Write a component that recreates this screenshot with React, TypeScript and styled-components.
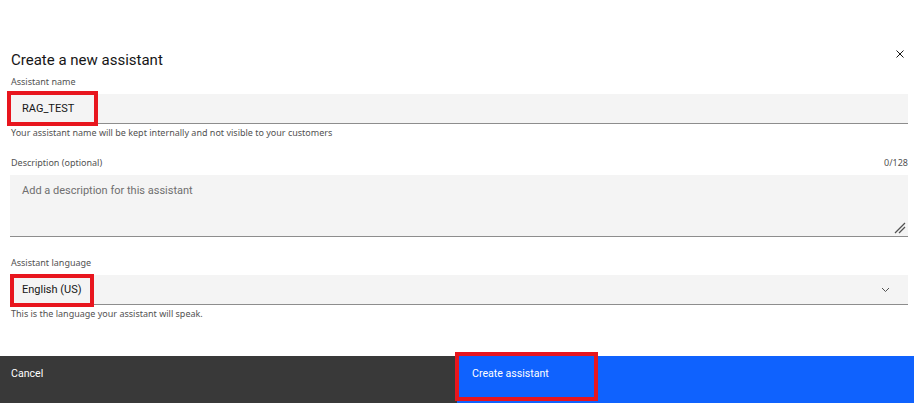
import React from "react";
import styled, { createGlobalStyle } from "styled-components";

const Global = createGlobalStyle`
  html, body { margin: 0; padding: 0; background: #ffffff; }
  body { font-family: "Noto Sans", Roboto, sans-serif; }
  * { box-sizing: border-box; }
`;

const Page = styled.div`
  position: relative;
  height: 100vh;
  display: flex;
  flex-direction: column;
  background: #ffffff;
`;

const Body = styled.div`
  position: relative;
  padding: 50px 6px 0 10px;
  display: flex;
  flex-direction: column;
`;

const Title = styled.h2`
  margin: 0 0 6px 1px;
  font-family: Roboto, "Noto Sans", sans-serif;
  font-weight: 400;
  font-size: 15px;
  line-height: 20px;
  color: #161616;
`;

const CloseButton = styled.button`
  position: absolute;
  top: 46px;
  right: 6px;
  width: 16px;
  height: 16px;
  padding: 0;
  border: 0;
  background: transparent;
  display: flex;
  align-items: center;
  justify-content: center;
`;

const Field = styled.div<{ $gap?: number }>`
  display: flex;
  flex-direction: column;
  margin-top: ${(p) => p.$gap ?? 0}px;
`;

const LabelRow = styled.div`
  display: flex;
  justify-content: space-between;
  align-items: center;
  margin-bottom: 6px;
  padding-left: 1px;
`;

const Label = styled.label`
  font-family: "Noto Sans", sans-serif;
  font-size: 9px;
  line-height: 12px;
  color: #525252;
`;

const Counter = styled.span`
  font-family: "Noto Sans", sans-serif;
  font-size: 9px;
  line-height: 12px;
  color: #525252;
`;

const InputBox = styled.div<{ $h: number }>`
  position: relative;
  height: ${(p) => p.$h}px;
  background: #f4f4f4;
  border-bottom: 1px solid #8d8d8d;
  display: flex;
  align-items: ${(p) => (p.$h > 40 ? "flex-start" : "center")};
  padding: ${(p) => (p.$h > 40 ? "9px 12px 0 12px" : "0 12px")};
`;

const Value = styled.span`
  font-family: Roboto, sans-serif;
  font-size: 11px;
  color: #161616;
`;

const Placeholder = styled.span`
  font-family: Roboto, sans-serif;
  font-size: 11px;
  color: #6f6f6f;
`;

const Helper = styled.div`
  margin-top: 3px;
  padding-left: 1px;
  font-family: "Noto Sans", sans-serif;
  font-size: 9px;
  line-height: 12px;
  color: #525252;
`;

const Resize = styled.svg`
  position: absolute;
  right: 2px;
  bottom: 2px;
`;

const Chevron = styled.svg`
  margin-left: auto;
  margin-right: 6px;
`;

const Footer = styled.div`
  margin-top: auto;
  height: 47px;
  display: grid;
  grid-template-columns: 457px 1fr;
`;

const FooterButton = styled.button<{ $primary?: boolean }>`
  border: 0;
  margin: 0;
  text-align: left;
  display: flex;
  align-items: flex-start;
  padding: ${(p) => (p.$primary ? "11px 15px" : "11px 11px")};
  background: ${(p) => (p.$primary ? "#0f62fe" : "#393939")};
  color: #ffffff;
  font-family: Roboto, sans-serif;
  font-size: 10.6px;
  line-height: 14px;
`;

const Highlight = styled.div<{ $x: number; $y: number; $w: number; $h: number }>`
  position: absolute;
  left: ${(p) => p.$x}px;
  top: ${(p) => p.$y}px;
  width: ${(p) => p.$w}px;
  height: ${(p) => p.$h}px;
  border: 4px solid #e8161e;
  pointer-events: none;
`;

export default function App() {
  return (
    <Page>
      <Global />
      <Body>
        <Title>Create a new assistant</Title>
        <CloseButton aria-label="Close">
          <svg width="8" height="8" viewBox="0 0 8 8">
            <path d="M0.5 0.5 L7.5 7.5 M7.5 0.5 L0.5 7.5" stroke="#161616" strokeWidth="1" />
          </svg>
        </CloseButton>

        <Field>
          <LabelRow>
            <Label>Assistant name</Label>
          </LabelRow>
          <InputBox $h={30}>
            <Value>RAG_TEST</Value>
          </InputBox>
          <Helper>Your assistant name will be kept internally and not visible to your customers</Helper>
        </Field>

        <Field $gap={18}>
          <LabelRow>
            <Label>Description (optional)</Label>
            <Counter>0/128</Counter>
          </LabelRow>
          <InputBox $h={62}>
            <Placeholder>Add a description for this assistant</Placeholder>
            <Resize width="12" height="12" viewBox="0 0 12 12">
              <path d="M1 11 L11 1 M5 11 L11 5" stroke="#525252" strokeWidth="1.3" />
            </Resize>
          </InputBox>
        </Field>

        <Field $gap={20}>
          <LabelRow>
            <Label>Assistant language</Label>
          </LabelRow>
          <InputBox $h={30}>
            <Value>English (US)</Value>
            <Chevron width="9" height="6" viewBox="0 0 9 6">
              <path d="M1 1 L4.5 4.5 L8 1" stroke="#525252" strokeWidth="1" fill="none" />
            </Chevron>
          </InputBox>
          <Helper>This is the language your assistant will speak.</Helper>
        </Field>
      </Body>

      <Footer>
        <FooterButton>Cancel</FooterButton>
        <FooterButton $primary>Create assistant</FooterButton>
      </Footer>

      <Highlight $x={7} $y={91} $w={91} $h={35} />
      <Highlight $x={10} $y={274} $w={84} $h={33} />
      <Highlight $x={455} $y={352} $w={143} $h={49} />
    </Page>
  );
}
